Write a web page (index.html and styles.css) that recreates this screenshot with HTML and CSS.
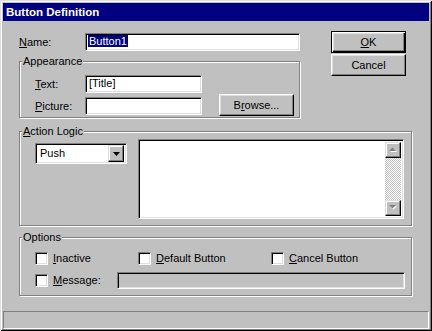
FILE: index.html
```html
<!DOCTYPE html>
<html lang="en">
<head>
  <meta charset="UTF-8" />
  <title>Button Definition</title>
  <link rel="stylesheet" href="styles.css">
</head>
<body>

<div class="window">
  <div class="titlebar">Button Definition</div>

  <div class="content">
    <div class="top">
      <div class="left-col">
        <div class="name-row">
          <span class="lbl name-lbl"><u>N</u>ame:</span>
          <div class="edit name-edit"><span class="sel">Button1</span></div>
        </div>

        <div class="group appearance">
          <span class="caption">Appearance</span>
          <div class="app-body">
            <div class="app-fields">
              <div class="field-row">
                <span class="lbl sub-lbl"><u>T</u>ext:</span>
                <div class="edit short-edit">[Title]</div>
              </div>
              <div class="field-row">
                <span class="lbl sub-lbl"><u>P</u>icture:</span>
                <div class="edit short-edit"></div>
              </div>
            </div>
            <div class="btn browse">B<u>r</u>owse...</div>
          </div>
        </div>
      </div>

      <div class="right-col">
        <div class="btn default"><u>O</u>K</div>
        <div class="btn">Cancel</div>
      </div>
    </div>

    <div class="group action">
      <span class="caption"><u>A</u>ction Logic</span>
      <div class="action-body">
        <div class="combo">
          <span class="combo-text">Push</span>
          <div class="combo-btn">
            <svg width="7" height="4" viewBox="0 0 7 4"><polygon points="0,0 7,0 3.5,4" fill="#000"/></svg>
          </div>
        </div>
        <div class="memo">
          <div class="memo-text"></div>
          <div class="vscroll">
            <div class="sbtn">
              <svg width="9" height="6" viewBox="0 0 9 6"><polygon points="1,5 8,5 4.5,1.5" fill="#fff"/><polygon points="0,4 7,4 3.5,0.5" fill="#808080"/></svg>
            </div>
            <div class="track"></div>
            <div class="sbtn">
              <svg width="9" height="6" viewBox="0 0 9 6"><polygon points="1,1 8,1 4.5,4.5" fill="#fff"/><polygon points="0,0 7,0 3.5,3.5" fill="#808080"/></svg>
            </div>
          </div>
        </div>
      </div>
    </div>

    <div class="group options">
      <span class="caption">Options</span>
      <div class="opt-row first">
        <div class="opt opt-1"><span class="check"></span><span class="lbl"><u>I</u>nactive</span></div>
        <div class="opt opt-2"><span class="check"></span><span class="lbl"><u>D</u>efault Button</span></div>
        <div class="opt"><span class="check"></span><span class="lbl"><u>C</u>ancel Button</span></div>
      </div>
      <div class="opt-row second">
        <div class="opt msg"><span class="check"></span><span class="lbl"><u>M</u>essage:</span></div>
        <div class="edit msg-edit"></div>
      </div>
    </div>
  </div>

  <div class="statusbar"></div>
</div>

</body>
</html>
```

FILE: styles.css
```css
body {
  margin: 0;
  font-family: "Liberation Sans", Arial, sans-serif;
  font-size: 11px;
  color: #000;
  background: #c0c0c0;
}
.window {
  width: 432px;
  height: 331px;
  box-sizing: border-box;
  padding: 3px 3px 2px 3px;
  display: flex;
  flex-direction: column;
  background: #c0c0c0;
  box-shadow: inset 1px 1px #dfdfdf, inset -1px -1px #000, inset 2px 2px #fff, inset -2px -2px #808080;
}
.titlebar {
  height: 18px;
  line-height: 18px;
  padding-left: 3px;
  background: #000080;
  color: #fff;
  font-weight: bold;
  font-size: 11.5px;
}
.content {
  padding: 10px 0 0 16px;
}
.lbl {
  line-height: 13px;
  white-space: nowrap;
}

/* sunken edit field */
.edit {
  box-sizing: border-box;
  height: 18px;
  padding: 0 3px;
  line-height: 14px;
  background: #fff;
  border: 1px solid;
  border-color: #808080 #fff #fff #808080;
  box-shadow: inset 1px 1px #000, inset -1px -1px #dfdfdf;
  white-space: nowrap;
  overflow: hidden;
}

/* raised button */
.btn {
  box-sizing: border-box;
  width: 75px;
  height: 22px;
  display: flex;
  align-items: center;
  justify-content: center;
  background: #c0c0c0;
  border: 1px solid;
  border-color: #fff #000 #000 #fff;
  box-shadow: inset -1px -1px #808080, inset 1px 1px #dfdfdf;
}
.btn.default {
  border-color: #000;
  box-shadow: inset 1px 1px #fff, inset -1px -1px #000, inset -2px -2px #808080, inset 2px 2px #dfdfdf;
}

/* etched group box */
.group {
  box-sizing: border-box;
  border: 1px solid #808080;
  box-shadow: inset 1px 1px #fff, 1px 1px #fff;
}
.caption {
  display: block;
  width: fit-content;
  margin: -7px 0 0 2px;
  padding: 0 1px;
  line-height: 13px;
  background: #c0c0c0;
}

.top {
  display: flex;
  align-items: flex-start;
}
.left-col {
  width: 281px;
}
.name-row {
  display: flex;
  align-items: center;
  margin-top: 2px;
}
.name-lbl {
  width: 66px;
}
.name-edit {
  width: 215px;
  padding-left: 2px;
}
.sel {
  background: #000080;
  color: #fff;
  padding: 0 1px;
}
.appearance {
  margin-top: 10px;
  height: 57px;
}
.app-body {
  display: flex;
  align-items: flex-start;
  padding-left: 15px;
  margin-top: 7px;
}
.app-fields {
  display: flex;
  flex-direction: column;
  gap: 4px;
}
.field-row {
  display: flex;
  align-items: center;
}
.sub-lbl {
  width: 50px;
}
.short-edit {
  width: 117px;
}
.browse {
  margin: 19px 0 0 17px;
}
.right-col {
  margin-left: 31px;
  display: flex;
  flex-direction: column;
  gap: 1px;
}

.action {
  width: 393px;
  height: 95px;
  margin-top: 13px;
}
.action-body {
  display: flex;
  align-items: flex-start;
  padding-left: 15px;
  margin-top: 1px;
}
.combo {
  box-sizing: border-box;
  width: 92px;
  height: 21px;
  margin-top: 4px;
  padding: 2px;
  display: flex;
  align-items: center;
  background: #fff;
  border: 1px solid;
  border-color: #808080 #fff #fff #808080;
  box-shadow: inset 1px 1px #000, inset -1px -1px #dfdfdf;
}
.combo-text {
  flex: 1;
  padding-left: 2px;
  line-height: 13px;
}
.combo-btn {
  box-sizing: border-box;
  width: 16px;
  height: 17px;
  display: flex;
  align-items: center;
  justify-content: center;
  background: #c0c0c0;
  border: 1px solid;
  border-color: #dfdfdf #000 #000 #dfdfdf;
  box-shadow: inset -1px -1px #808080, inset 1px 1px #fff;
}
.memo {
  box-sizing: border-box;
  width: 266px;
  height: 80px;
  margin-left: 11px;
  padding: 2px;
  display: flex;
  background: #fff;
  border: 1px solid;
  border-color: #808080 #fff #fff #808080;
  box-shadow: inset 1px 1px #000, inset -1px -1px #dfdfdf;
}
.memo-text {
  flex: 1;
}
.vscroll {
  width: 16px;
  display: flex;
  flex-direction: column;
}
.sbtn {
  box-sizing: border-box;
  height: 16px;
  display: flex;
  align-items: center;
  justify-content: center;
  background: #c0c0c0;
  border: 1px solid;
  border-color: #dfdfdf #000 #000 #dfdfdf;
  box-shadow: inset -1px -1px #808080, inset 1px 1px #fff;
}
.track {
  flex: 1;
  background: repeating-conic-gradient(#c0c0c0 0 25%, #fff 0 50%) 0 0 / 2px 2px;
}

.options {
  width: 393px;
  height: 59px;
  margin-top: 11px;
}
.opt-row {
  display: flex;
  align-items: center;
  padding-left: 15px;
}
.opt-row.first {
  margin-top: 8px;
  height: 13px;
}
.opt-row.second {
  margin-top: 7px;
  height: 17px;
}
.opt {
  display: flex;
  align-items: center;
  gap: 5px;
}
.opt-1 {
  width: 103px;
}
.opt-2 {
  width: 133px;
}
.msg {
  width: 82px;
}
.check {
  box-sizing: border-box;
  width: 13px;
  height: 13px;
  background: #fff;
  border: 1px solid;
  border-color: #808080 #fff #fff #808080;
  box-shadow: inset 1px 1px #000, inset -1px -1px #dfdfdf;
}
.msg-edit {
  width: 288px;
  height: 17px;
  background: #c0c0c0;
}

.statusbar {
  margin-top: auto;
  height: 18px;
  box-sizing: border-box;
  border: 1px solid;
  border-color: #808080 #fff #fff #808080;
}
```
